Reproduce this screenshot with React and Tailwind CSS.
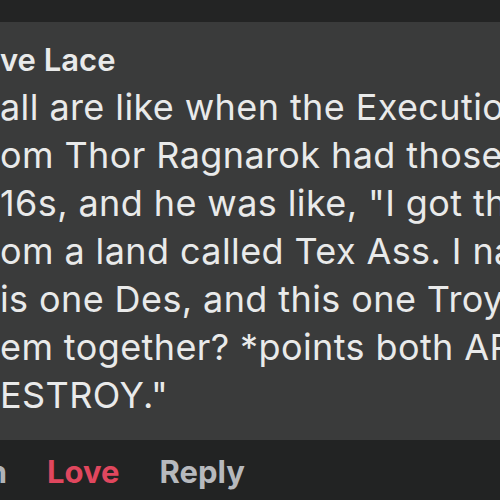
export default function App() {
  const lines = [
    { hidden: "Y'", text: "all are like when the Executioner", pad: "pl-0" },
    { hidden: "fr", text: "om Thor Ragnarok had those", pad: "pl-0" },
    { hidden: "M", text: "16s, and he was like, \"I got these", pad: "pl-0" },
    { hidden: "fr", text: "om a land called Tex Ass. I named", pad: "pl-0" },
    { hidden: "th", text: "is one Des, and this one Troy. Put", pad: "pl-0" },
    { hidden: "th", text: "em together? *points both AR's*", pad: "pl-0" },
    { hidden: "D", text: "ESTROY.\"", pad: "pl-0" },
  ];

  return (
    <div
      className="w-[500px] h-[500px] overflow-hidden flex flex-col bg-[#232424]"
      style={{ fontFamily: "Inter, 'Noto Sans', sans-serif" }}
    >
      <div className="h-[22px] shrink-0 bg-[#232424]" />

      <div className="h-[418px] shrink-0 bg-[#3a3b3b] pt-[20px] overflow-hidden text-[#e9eaea]">
        <div className="text-[31px] leading-[36px] font-semibold whitespace-nowrap">
          <span className="inline-flex w-0 justify-end">
            <span className="mr-[6px]">Ste</span>
          </span>
          ve Lace
        </div>
        <div className="mt-[5px] text-[36px] leading-[48px] tracking-[0.4px]">
          {lines.map((l, i) => (
            <div key={i} className={"whitespace-nowrap " + l.pad}>
              <span className="inline-flex w-0 justify-end">
                <span className="mr-[10px]">{l.hidden}</span>
              </span>
              {l.text}
            </div>
          ))}
        </div>
      </div>

      <div className="flex-1 bg-[#222323] flex items-start pt-[12px] gap-[40px] text-[31px] font-bold leading-[40px] whitespace-nowrap">
        <span className="inline-flex w-[7px] justify-end text-[#b0b3b8]">1h</span>
        <span className="text-[#e0475e]">Love</span>
        <span className="text-[#b7b9bd]">Reply</span>
      </div>
    </div>
  );
}
